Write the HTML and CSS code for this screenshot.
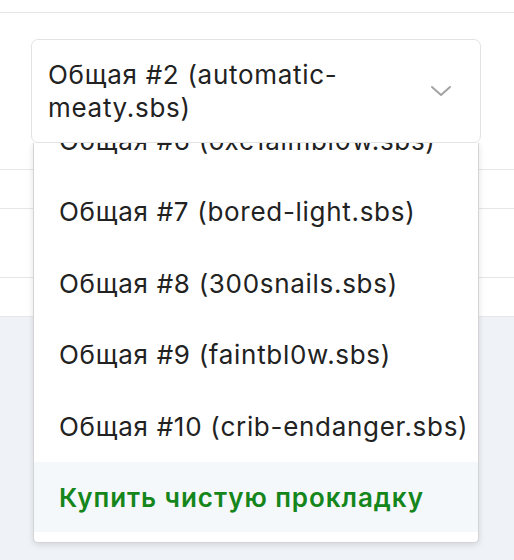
FILE: index.html
```html
<!DOCTYPE html>
<html lang="ru">
<head>
  <meta charset="UTF-8">
  <meta name="viewport" content="width=device-width, initial-scale=1.0">
  <title>Выбор прокладки</title>
  <link rel="stylesheet" href="styles.css">
</head>
<body>
  <div class="page">
    <div class="top-row"></div>

    <div class="field-row">
      <div class="picker">
        <div class="select-box">
          <span class="select-value">Общая #2 (automatic-meaty.sbs)</span>
          <svg class="chevron" width="22" height="12" viewBox="0 0 22 12">
            <path d="M2 2 L11 10 L20 2" fill="none" stroke="#a3a3a3" stroke-width="2" stroke-linecap="round" stroke-linejoin="round"/>
          </svg>
        </div>

        <div class="menu">
          <div class="menu-item">Общая #6 (oxe1aimbl0w.sbs)</div>
          <div class="menu-item">Общая #7 (bored-light.sbs)</div>
          <div class="menu-item">Общая #8 (300snails.sbs)</div>
          <div class="menu-item">Общая #9 (faintbl0w.sbs)</div>
          <div class="menu-item">Общая #10 (crib-endanger.sbs)</div>
          <div class="menu-item buy">Купить чистую прокладку</div>
        </div>
      </div>
    </div>

    <div class="row row-short"></div>
    <div class="row row-tall"></div>
    <div class="row row-short"></div>

    <div class="footer"></div>
  </div>
</body>
</html>
```

FILE: styles.css
```css
body {
  margin: 0;
  background: #ffffff;
  font-family: Inter, "Noto Sans", sans-serif;
  color: #222222;
}

.page {
  min-height: 560px;
  display: flex;
  flex-direction: column;
}

.top-row {
  height: 12px;
  border-bottom: 1px solid #e6e6e6;
}

.field-row {
  height: 157px;
  padding: 26px 33px 0 31px;
  box-sizing: border-box;
  border-bottom: 1px solid #e6e6e6;
}

.picker {
  position: relative;
}

.select-box {
  position: relative;
  z-index: 4;
  height: 104px;
  box-sizing: border-box;
  display: flex;
  align-items: center;
  padding: 0 28px 0 16px;
  background: #ffffff;
  border: 1px solid #e3e3e3;
  border-radius: 7px;
}

.select-value {
  flex: 1;
  font-size: 26px;
  line-height: 33px;
  letter-spacing: 0.7px;
  padding-right: 50px;
}

.chevron {
  flex: none;
}

.menu {
  position: absolute;
  z-index: 3;
  top: 104px;
  left: 2px;
  right: 2px;
  height: 400px;
  box-sizing: border-box;
  padding-bottom: 10px;
  display: flex;
  flex-direction: column;
  justify-content: flex-end;
  overflow: hidden;
  background: #ffffff;
  border: 1px solid #d4d4d4;
  border-top: none;
  border-radius: 0 0 5px 5px;
  box-shadow: 0 2px 6px rgba(0, 0, 0, 0.12);
}

.menu-item {
  flex: none;
  height: 71.5px;
  display: flex;
  align-items: center;
  padding: 0 25px;
  font-size: 26px;
  letter-spacing: 0.7px;
  white-space: nowrap;
}

.menu-item.buy {
  height: 70px;
  background: #f5f8fb;
  color: #15861c;
  font-weight: 600;
  letter-spacing: 0.95px;
}

.row {
  border-bottom: 1px solid #e6e6e6;
}

.row-short {
  height: 38px;
}

.row-tall {
  height: 68px;
}

.footer {
  flex: 1;
  background: #eff2f7;
}
```
